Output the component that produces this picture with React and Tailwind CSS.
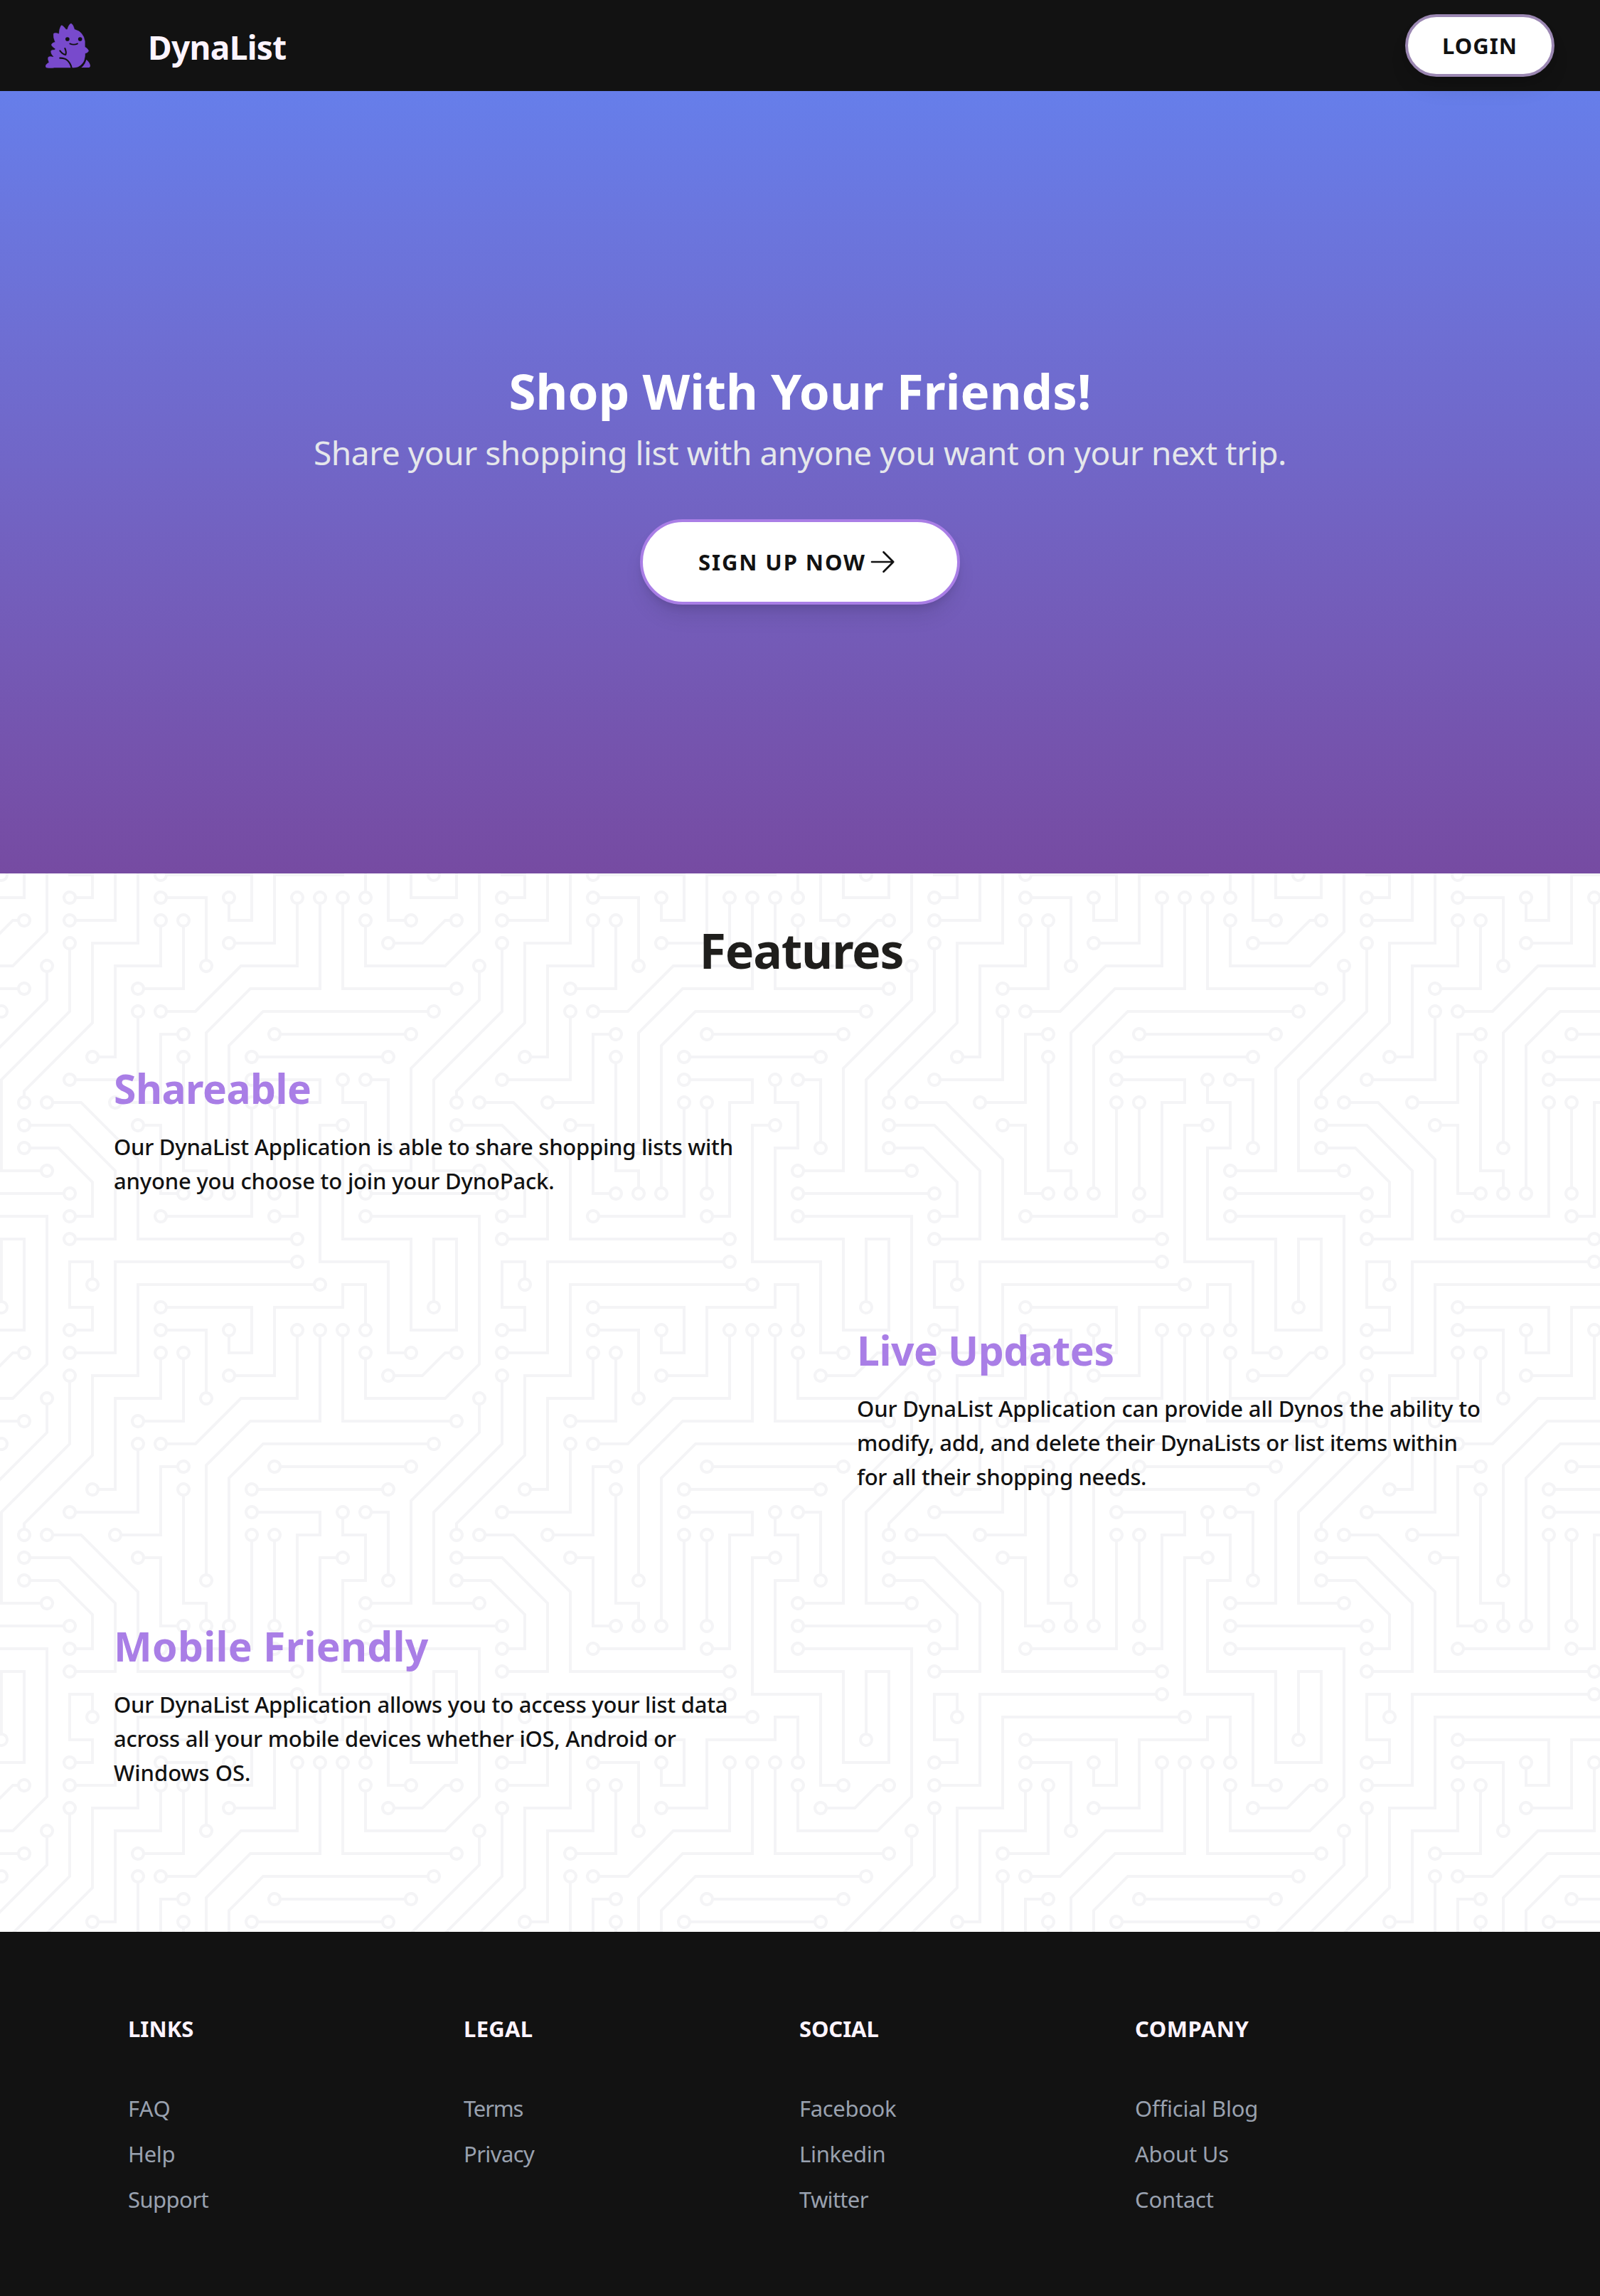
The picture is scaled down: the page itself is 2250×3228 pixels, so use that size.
import React from "react";

const CIRCUIT_PATH =
  "M44.1 224a5 5 0 1 1 0 2H0v-2h44.1zm160 48a5 5 0 1 1 0 2H82v-2h122.1zm57.8-46a5 5 0 1 1 0-2H304v2h-42.1zm0 16a5 5 0 1 1 0-2H304v2h-42.1zm6.2-114a5 5 0 1 1 0 2h-86.2a5 5 0 1 1 0-2h86.2zm-256-48a5 5 0 1 1 0 2H0v-2h12.1zm185.8 34a5 5 0 1 1 0-2h86.2a5 5 0 1 1 0 2h-86.2zM258 12.1a5 5 0 1 1-2 0V0h2v12.1zm-64 208a5 5 0 1 1-2 0v-54.2a5 5 0 1 1 2 0v54.2zm48-198.2V80h62v2h-64V21.9a5 5 0 1 1 2 0zm16 16V64h46v2h-48V37.9a5 5 0 1 1 2 0zm-128 96V208h16v12.1a5 5 0 1 1-2 0V210h-16v-76.1a5 5 0 1 1 2 0zm-5.9-21.9a5 5 0 1 1 0 2H114v48H85.9a5 5 0 1 1 0-2H112v-48h12.1zm-6.2 130a5 5 0 1 1 0-2H176v-74.1a5 5 0 1 1 2 0V242h-60.1zm-16-64a5 5 0 1 1 0-2H114v48h10.1a5 5 0 1 1 0 2H112v-48h-10.1zM66 284.1a5 5 0 1 1-2 0V274H50v30h-2v-32h18v12.1zM236.1 176a5 5 0 1 1 0 2H226v94h48v32h-2v-30h-48v-98h12.1zm25.8-30a5 5 0 1 1 0-2H274v44.1a5 5 0 1 1-2 0V146h-10.1zm-64 96a5 5 0 1 1 0-2H208v-80h16v-14h-42.1a5 5 0 1 1 0-2H226v18h-16v80h-12.1zm86.2-210a5 5 0 1 1 0 2H272V0h2v32h10.1zM98 101.9V146H53.9a5 5 0 1 1 0-2H96v-42.1a5 5 0 1 1 2 0zM53.9 34a5 5 0 1 1 0-2H80V0h2v34H53.9zm60.1 3.9V66H82v64H69.9a5 5 0 1 1 0-2H80V64h32V37.9a5 5 0 1 1 2 0zM101.9 82a5 5 0 1 1 0-2H128V37.9a5 5 0 1 1 2 0V82h-28.1zm16-64a5 5 0 1 1 0-2H146v44.1a5 5 0 1 1-2 0V18h-26.1zm102.2 270a5 5 0 1 1 0 2H98v14h-2v-16h124.1zM242 149.9V160h16v34h-16v62h48v48h-2v-46h-48v-66h16v-30h-16v-12.1a5 5 0 1 1 2 0zM53.9 18a5 5 0 1 1 0-2H64V2H48V0h18v18H53.9zm112 32a5 5 0 1 1 0-2H192V0h50v2h-48v48h-28.1zm-48-48a5 5 0 0 1-9.8-2h2.07a3 3 0 1 0 5.66 0H178v34h-18V21.9a5 5 0 1 1 2 0V32h14V2h-58.1zm0 96a5 5 0 1 1 0-2H137l32-32h39V21.9a5 5 0 1 1 2 0V66h-40.17l-32 32H117.9zm28.1 90.1a5 5 0 1 1-2 0v-76.51L175.59 80H224V21.9a5 5 0 1 1 2 0V82h-49.59L146 112.41v75.69zm16 32a5 5 0 1 1-2 0v-99.51L184.59 96H300.1a5 5 0 0 1 3.9-3.9v2.07a3 3 0 0 0 0 5.66v2.07a5 5 0 0 1-3.9-3.9H185.41L162 121.41v98.69zm-144-64a5 5 0 1 1-2 0v-3.51l48-48V48h32V0h2v50H66v55.41l-48 48v2.69zM50 53.9v43.51l-48 48V208h26.1a5 5 0 1 1 0 2H0v-65.41l48-48V53.9a5 5 0 1 1 2 0zm-16 16V89.41l-34 34v-2.82l32-32V69.9a5 5 0 1 1 2 0zM12.1 32a5 5 0 1 1 0 2H9.41L0 43.41V40.6L8.59 32h3.51zm265.8 18a5 5 0 1 1 0-2h18.69l7.41-7.41v2.82L297.41 50H277.9zm-16 160a5 5 0 1 1 0-2H288v-71.41l16-16v2.82l-14 14V210h-28.1zm-208 32a5 5 0 1 1 0-2H64v-22.59L40.59 194H21.9a5 5 0 1 1 0-2H41.41L66 216.59V242H53.9zm150.2 14a5 5 0 1 1 0 2H96v-56.6L56.6 162H37.9a5 5 0 1 1 0-2h19.5L98 200.6V256h106.1zm-150.2 2a5 5 0 1 1 0-2H80v-46.59L48.59 178H21.9a5 5 0 1 1 0-2H49.41L82 208.59V258H53.9zM34 39.8v1.61L9.41 66H0v-2h8.59L32 40.59V0h2v39.8zM2 300.1a5 5 0 0 1 3.9 3.9H3.83A3 3 0 0 0 0 302.17V256h18v48h-2v-46H2v42.1zM34 241v63h-2v-62H0v-2h34v1zM17 18H0v-2h16V0h2v18h-1zm273-2h14v2h-16V0h2v16zm-32 273v15h-2v-14h-14v14h-2v-16h18v1zM0 92.1A5.02 5.02 0 0 1 6 97a5 5 0 0 1-6 4.9v-2.07a3 3 0 1 0 0-5.66V92.1zM80 272h2v32h-2v-32zm37.9 32h-2.07a3 3 0 0 0-5.66 0h-2.07a5 5 0 0 1 9.8 0zM5.9 0A5.02 5.02 0 0 1 0 5.9V3.83A3 3 0 0 0 3.83 0H5.9zm294.2 0h2.07A3 3 0 0 0 304 3.83V5.9a5 5 0 0 1-3.9-5.9zm3.9 300.1v2.07a3 3 0 0 0-1.83 1.83h-2.07a5 5 0 0 1 3.9-3.9z";

// Walks the trace path and returns the centre of every round pad, so each can be hollowed out.
function padCenters(d) {
  const tokens = d.match(/[a-zA-Z]|-?\d*\.?\d+/g);
  const centers = [];
  let i = 0, x = 0, y = 0, startX = 0, startY = 0, cmd = "";
  const num = () => parseFloat(tokens[i++]);
  while (i < tokens.length) {
    if (/[a-zA-Z]/.test(tokens[i])) cmd = tokens[i++];
    const rel = cmd === cmd.toLowerCase();
    const kind = cmd.toLowerCase();
    if (kind === "z") {
      x = startX;
      y = startY;
    } else if (kind === "h") {
      const a = num();
      x = rel ? x + a : a;
    } else if (kind === "v") {
      const a = num();
      y = rel ? y + a : a;
    } else if (kind === "a") {
      const radius = num();
      num();
      num();
      const large = num();
      num();
      const a = num(), b = num();
      const nx = rel ? x + a : a;
      const ny = rel ? y + b : b;
      if (radius === 5 && large === 1) {
        centers.push([
          Math.round((x + nx) / 2 + ((ny - y) / 2) * 4.9),
          Math.round((y + ny) / 2 - ((nx - x) / 2) * 4.9),
        ]);
      }
      x = nx;
      y = ny;
    } else {
      const a = num(), b = num();
      x = rel ? x + a : a;
      y = rel ? y + b : b;
      if (kind === "m") {
        startX = x;
        startY = y;
      }
    }
  }
  return centers;
}

const PADS = padCenters(CIRCUIT_PATH);

function CircuitBackground() {
  return (
    <svg className="absolute inset-0 h-full w-full" aria-hidden="true">
      <defs>
        <pattern id="circuit" width="304" height="304" patternUnits="userSpaceOnUse" patternTransform="scale(2)">
          <path d={CIRCUIT_PATH} fill="#f4f4f6" />
          {PADS.map(([cx, cy]) => (
            <circle key={`${cx}-${cy}`} cx={cx} cy={cy} r="3" fill="#ffffff" />
          ))}
        </pattern>
      </defs>
      <rect width="100%" height="100%" fill="url(#circuit)" />
    </svg>
  );
}

function DinoLogo() {
  return (
    <svg className="h-16 w-16" viewBox="72 36 192 192" fill="none" aria-hidden="true">
      <path
        fill="#784acc"
        stroke="#784acc"
        strokeWidth="1.5"
        strokeLinejoin="round"
        d="M72 218Q74 210 87 203Q80 188 84 181Q90 176 102 180Q106 181 106 178Q94 168 95 155Q98 149 108 151Q113 150 114 146Q98 136 97 129Q98 121 113 118Q104 98 106 82Q112 76 129 83Q130 60 138 48Q143 44 158 64Q162 66 165 62Q170 42 180 39Q188 42 194 64Q232 74 238 114V138Q252 146 254 155Q250 163 239 165Q240 198 222 213Q210 225 192 225L110 225Q94 228 76 225Q72 223 72 218Z"
      />
      <path fill="#784acc" d="M216 225Q236 212 244 191Q259 203 261 217Q261 224 256 225Z" />
      <path stroke="#121212" strokeWidth="6.5" strokeLinecap="round" d="M133 185C158 184 176 200 182 227" />
      <path stroke="#121212" strokeWidth="6" d="M243 178C241 204 230 219 213 228" />
      <path
        stroke="#121212"
        strokeWidth="6"
        strokeLinecap="round"
        strokeLinejoin="round"
        d="M133 154Q145 170 157 171Q161 160 154 144"
      />
      <path stroke="#121212" strokeWidth="5.5" strokeLinecap="round" d="M175 124Q191 132 207 124" />
      <circle cx="164.5" cy="105" r="8.5" fill="#121212" />
      <circle cx="218" cy="105" r="8.5" fill="#121212" />
    </svg>
  );
}

function ArrowRight() {
  return (
    <svg
      className="ml-[3px] h-10 w-10"
      viewBox="0 0 40 40"
      fill="none"
      stroke="currentColor"
      strokeWidth="2.7"
      strokeLinecap="round"
      strokeLinejoin="round"
      aria-hidden="true"
    >
      <path d="M5 20H35.2M21.5 6.3L35.2 20L21.5 33.7" />
    </svg>
  );
}

const FEATURES = [
  {
    title: "Shareable",
    titleClass: "tracking-[-0.51px]",
    lines: [
      ["Our DynaList Application is able to share shopping lists with", "tracking-[-0.26px]"],
      ["anyone you choose to join your DynoPack.", "tracking-[-0.19px]"],
    ],
  },
  {
    title: "Live Updates",
    titleClass: "tracking-[-0.45px]",
    right: true,
    lines: [
      ["Our DynaList Application can provide all Dynos the ability to", "tracking-[-0.15px]"],
      ["modify, add, and delete their DynaLists or list items within", "tracking-[-0.28px]"],
      ["for all their shopping needs.", "tracking-[-0.34px]"],
    ],
  },
  {
    title: "Mobile Friendly",
    titleClass: "tracking-[0.26px]",
    lines: [
      ["Our DynaList Application allows you to access your list data", "tracking-[-0.23px]"],
      ["across all your mobile devices whether iOS, Android or", "tracking-[-0.27px]"],
      ["Windows OS.", "tracking-[0px]"],
    ],
  },
];

const FOOTER = [
  {
    title: "Links",
    titleClass: "tracking-[0.03px]",
    links: [["FAQ", "tracking-[0.4px]"], ["Help", "tracking-[-0.3px]"], ["Support", "tracking-[-0.56px]"]],
  },
  {
    title: "Legal",
    titleClass: "tracking-[0.3px]",
    links: [["Terms", "tracking-[-1.2px]"], ["Privacy", "tracking-[-0.6px]"]],
  },
  {
    title: "Social",
    titleClass: "tracking-[-0.12px]",
    links: [["Facebook", "tracking-[-0.35px]"], ["Linkedin", "tracking-[-0.3px]"], ["Twitter", "tracking-[-0.7px]"]],
  },
  {
    title: "Company",
    titleClass: "tracking-[0.5px]",
    links: [["Official Blog", "tracking-[-0.2px]"], ["About Us", "tracking-[-0.2px]"], ["Contact", "tracking-[-0.2px]"]],
  },
];

const BUTTON =
  "flex items-center rounded-full border-4 bg-white text-[31px] font-bold uppercase text-[#121212] shadow-[0_20px_30px_-6px_rgba(0,0,0,0.1),0_8px_12px_-4px_rgba(0,0,0,0.1)]";

export default function App() {
  return (
    <div className="min-h-[3228px] w-full bg-white font-['Noto_Sans','Open_Sans',sans-serif]">
      <header className="relative z-10 flex h-32 items-center justify-between bg-[#121212] px-16">
        <div className="flex items-center gap-20">
          <DinoLogo />
          <span className="pt-[3px] text-[46px] leading-[64px] font-bold tracking-[-0.68px] text-[#fdf4ff]">DynaList</span>
        </div>
        <button className={`${BUTTON} h-[88px] w-[210px] border-[#9b87b2] pl-[48px] tracking-[1px]`}>Login</button>
      </header>

      <section className="flex h-[1100px] flex-col items-center bg-linear-to-b from-[#667eea] to-[#764ba2] pt-[381px]">
        <h1 className="text-[69px] leading-[80px] font-bold tracking-[0.08px] text-white">Shop With Your Friends!</h1>
        <p className="mt-[15px] text-[46px] leading-[64px] tracking-[-0.45px] text-gray-200">
          Share your shopping list with anyone you want on your next trip.
        </p>
        <button className={`${BUTTON} mt-[62px] h-[120px] w-[450px] border-[#a97ee6] pl-[78px] tracking-[1.9px]`}>
          Sign up now
          <ArrowRight />
        </button>
      </section>

      <section className="relative pt-[68px] pb-[200px]">
        <CircuitBackground />
        <div className="relative">
          <h2 className="pl-1 text-center text-[68px] leading-[80px] font-bold tracking-[-1.16px] text-[#1f1e1c]">
            Features
          </h2>
          <div className="mt-[118px] flex flex-col gap-[178px] px-40">
            {FEATURES.map((f) => (
              <article key={f.title} className={f.right ? "w-[885px] self-end" : "w-[885px]"}>
                <h3 className={`text-[57px] leading-[72px] font-bold text-[#a97ee6] ${f.titleClass}`}>{f.title}</h3>
                <p className="mt-[22px] text-[31px] leading-[48px] font-medium text-[#121212]">
                  {f.lines.map(([line, tracking]) => (
                    <span key={line} className={`block whitespace-nowrap ${tracking}`}>
                      {line}
                    </span>
                  ))}
                </p>
              </article>
            ))}
          </div>
        </div>
      </section>

      <footer className="h-[512px] bg-[#121212] pt-28 pl-[180px] text-[31px] leading-[48px]">
        <div className="grid w-[1888px] grid-cols-4">
          {FOOTER.map((col) => (
            <div key={col.title}>
              <h4 className={`font-bold text-[#fdf4ff] uppercase ${col.titleClass}`}>{col.title}</h4>
              <ul className="mt-16 flex flex-col gap-4 text-gray-400">
                {col.links.map(([label, tracking]) => (
                  <li key={label} className={tracking}>
                    {label}
                  </li>
                ))}
              </ul>
            </div>
          ))}
        </div>
      </footer>
    </div>
  );
}
